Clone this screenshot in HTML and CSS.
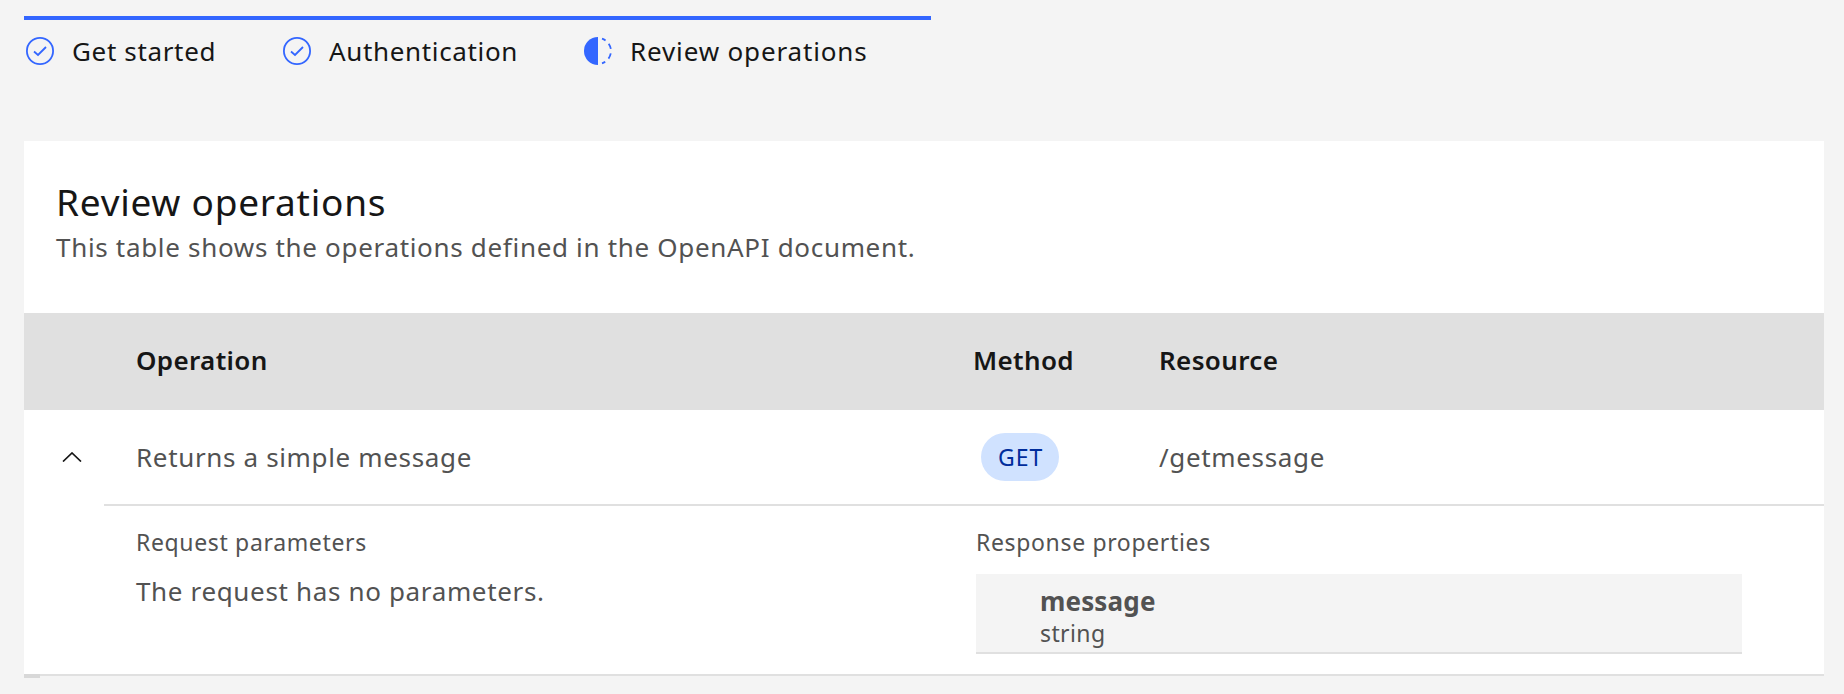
FILE: index.html
```html
<!doctype html>
<html lang="en">
  <head>
    <meta charset="UTF-8" />
    <title>Review operations</title>
    <link rel="stylesheet" href="styles.css">
  </head>
  <body>
    <div class="progress">
      <div class="step step-first">
        <svg class="step-icon" viewBox="0 0 28 28"><circle cx="14" cy="14" r="13.1" fill="none" stroke="#3366ff" stroke-width="1.8"/><path d="M8 14.5 12 18 20 10" fill="none" stroke="#3366ff" stroke-width="1.8"/></svg>
        <span>Get started</span>
      </div>
      <div class="step step-second">
        <svg class="step-icon" viewBox="0 0 28 28"><circle cx="14" cy="14" r="13.1" fill="none" stroke="#3366ff" stroke-width="1.8"/><path d="M8 14.5 12 18 20 10" fill="none" stroke="#3366ff" stroke-width="1.8"/></svg>
        <span>Authentication</span>
      </div>
      <div class="step step-third">
        <svg class="step-icon" viewBox="0 0 28 28"><path d="M14 0A14 14 0 0 0 14 28Z" fill="#3366ff"/><path d="M18 1.64A13 13 0 0 1 18 26.36" fill="none" stroke="#3366ff" stroke-width="1.8" stroke-dasharray="4 4.5 5.7 4.5 5.7 4.5 4 99"/></svg>
        <span>Review operations</span>
      </div>
    </div>

    <div class="panel">
      <div class="panel-head">
        <h2>Review operations</h2>
        <p>This table shows the operations defined in the OpenAPI document.</p>
      </div>

      <div class="table-head">
        <div></div>
        <div>Operation</div>
        <div>Method</div>
        <div>Resource</div>
      </div>

      <div class="table-row">
        <div class="toggle">
          <svg viewBox="0 0 20 10" width="20" height="10"><path d="M1 9.5 10 1l9 8.5" fill="none" stroke="#161616" stroke-width="1.7"/></svg>
        </div>
        <div>Returns a simple message</div>
        <div><span class="tag">GET</span></div>
        <div>/getmessage</div>
      </div>

      <div class="details">
        <div>
          <div class="details-label">Request parameters</div>
          <div class="details-text">The request has no parameters.</div>
        </div>
        <div>
          <div class="details-label">Response properties</div>
          <div class="prop">
            <div class="prop-name">message</div>
            <div class="prop-type">string</div>
          </div>
        </div>
      </div>
      <div class="panel-corner"></div>
    </div>
  </body>
</html>
```

FILE: styles.css
```css
* {
  box-sizing: border-box;
}
body {
  margin: 0;
  padding: 16px 20px 0 24px;
  height: 694px;
  overflow: hidden;
  background: #f4f4f4;
  color: #161616;
  font-family: "Noto Sans", Roboto, sans-serif;
  font-size: 26px;
  letter-spacing: 0.65px;
}
.progress {
  display: flex;
  width: 907px;
  height: 125px;
  border-top: 4px solid #3366ff;
  padding-top: 18px;
  align-items: flex-start;
}
.step {
  display: flex;
  align-items: center;
  height: 28px;
  line-height: 32px;
  padding-bottom: 2px;
}
.step-icon {
  width: 28px;
  height: 28px;
  flex: none;
}
.step span {
  margin-left: 18px;
}
.step-first {
  margin-left: 2px;
  width: 257px;
}
.step-second {
  width: 301px;
}
.step-third {
  letter-spacing: 0.85px;
}
.panel {
  position: relative;
  background: white;
  height: 535px;
  border-bottom: 2px solid #e0e0e0;
}
.panel-head {
  height: 172px;
  padding: 40px 32px 0;
}
.panel-head h2 {
  margin: 0;
  font-size: 37px;
  font-weight: 400;
  line-height: 42px;
  letter-spacing: 0.75px;
}
.panel-head p {
  margin: 8px 0 0;
  line-height: 32px;
  color: #525252;
  letter-spacing: 0.68px;
}
.table-head {
  display: grid;
  grid-template-columns: 112px 837px 186px 1fr;
  height: 97px;
  padding-bottom: 3px;
  align-items: center;
  background: #e0e0e0;
  font-weight: 600;
  letter-spacing: 0.35px;
}
.table-row {
  display: grid;
  grid-template-columns: 112px 837px 186px 1fr;
  height: 94px;
  padding-bottom: 1px;
  align-items: center;
  color: #525252;
}
.toggle {
  display: flex;
  padding-left: 38px;
}
.tag {
  display: inline-flex;
  align-items: center;
  height: 48px;
  padding: 0 16px 0 17px;
  margin-left: 8px;
  border-radius: 24px;
  background: #d0e2ff;
  color: #002d9c;
  font-size: 23px;
  letter-spacing: 1px;
}
.details {
  display: grid;
  grid-template-columns: 840px 766px;
  margin-left: 80px;
  padding: 21px 0 0 32px;
  border-top: 2px solid #e0e0e0;
}
.details-label {
  font-size: 23px;
  line-height: 30px;
  color: #525252;
  margin-bottom: 17px;
}
.details-text {
  line-height: 34px;
  color: #525252;
}
.prop {
  height: 80px;
  padding: 10px 0 0 64px;
  background: #f4f4f4;
  border-bottom: 2px solid #e0e0e0;
  color: #525252;
}
.prop-name {
  font-weight: 700;
  line-height: 34px;
  letter-spacing: 0.15px;
}
.prop-type {
  font-size: 23px;
  line-height: 30px;
  letter-spacing: 0.4px;
}
.panel-corner {
  position: absolute;
  left: 0;
  bottom: -4px;
  width: 16px;
  height: 4px;
  background: #d8d8d8;
}
```
